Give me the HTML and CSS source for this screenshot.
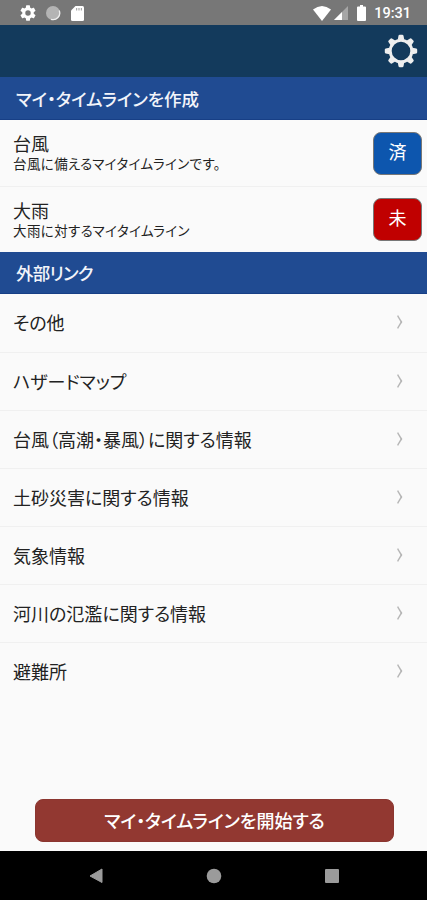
FILE: index.html
```html
<!DOCTYPE html>
<html lang="ja">
  <head>
    <meta charset="UTF-8">
    <meta name="viewport" content="width=device-width">
    <title>マイ・タイムライン</title>
    <link rel="stylesheet" href="styles.css">
  </head>
  <body>
    <div class="status">
      <svg class="status-gear" width="16" height="16" viewBox="2 2 20 20"><path fill="#fff" d="M19.14 12.94c.04-.3.06-.61.06-.94s-.02-.64-.07-.94l2.03-1.58a.49.49 0 0 0 .12-.61l-1.92-3.32a.49.49 0 0 0-.59-.22l-2.39.96a7 7 0 0 0-1.62-.94l-.36-2.54a.48.48 0 0 0-.48-.41h-3.84a.48.48 0 0 0-.47.41l-.36 2.54a7.2 7.2 0 0 0-1.62.94l-2.39-.96a.48.48 0 0 0-.59.22L2.74 8.87a.48.48 0 0 0 .12.61l2.03 1.58a6 6 0 0 0 0 1.88l-2.03 1.58a.49.49 0 0 0-.12.61l1.92 3.32c.12.22.37.29.59.22l2.39-.96c.5.38 1.03.7 1.62.94l.36 2.54c.05.24.24.41.48.41h3.84c.24 0 .44-.17.47-.41l.36-2.54a7 7 0 0 0 1.62-.94l2.39.96c.22.08.47 0 .59-.22l1.92-3.32a.48.48 0 0 0-.12-.61zM12 15.4a3.4 3.4 0 1 1 0-6.8 3.4 3.4 0 0 1 0 6.8z"/></svg>
      <svg class="status-sync" width="16" height="16" viewBox="0 0 16 16"><circle cx="8" cy="8" r="7" fill="#b4b4b4"/><path d="M14.2 5.5A6.6 6.6 0 0 1 6 14.3" fill="none" stroke="#eee" stroke-width="1.3"/></svg>
      <svg class="status-card" width="13" height="15" viewBox="0 0 13 15"><path fill="#fff" d="M4.5 0H11.5Q13 0 13 1.5V13.5Q13 15 11.5 15H1.5Q0 15 0 13.5V4.5z"/><path stroke="#aaa" stroke-width="1.2" d="M5.6 2v2.5M8 2v2.5M10.4 2v2.5"/></svg>
      <svg class="status-wifi" width="18" height="15" viewBox="0 0 18 15"><path fill="#fff" d="M0 3.500Q9-3.500 18 3.500L9 15z"/></svg>
      <svg class="status-signal" width="14" height="14" viewBox="0 0 14 14"><path fill="#a6a6a6" d="M14 0v14H0z"/><path fill="#fff" d="M8 6v8H0z"/></svg>
      <svg class="status-battery" width="9" height="16" viewBox="0 0 9 16"><path fill="#fff" d="M3 0h3v1.5h2q1 0 1 1V15q0 1-1 1H1q-1 0-1-1V2.5q0-1 1-1h2z"/></svg>
      <span class="clock">19:31</span>
    </div>
    <header class="appbar">
      <svg width="34" height="34" viewBox="-17 -17 34 34">
        <circle r="10.8" fill="none" stroke="#eee" stroke-width="3"/>
        <g fill="#eee">
          <path id="tooth" d="M-3.200-11.500L-2.500-15.300Q-2.300-16.200-1.200-16.200H1.200Q2.300-16.200 2.500-15.300L3.200-11.500z"/>
          <use href="#tooth" transform="rotate(45)"/>
          <use href="#tooth" transform="rotate(90)"/>
          <use href="#tooth" transform="rotate(135)"/>
          <use href="#tooth" transform="rotate(180)"/>
          <use href="#tooth" transform="rotate(225)"/>
          <use href="#tooth" transform="rotate(270)"/>
          <use href="#tooth" transform="rotate(315)"/>
        </g>
      </svg>
    </header>
    <main>
      <h2>マイ・タイムラインを作成</h2>
      <ul class="timelines">
        <li>
          <div>
            <h3>台風</h3>
            <p>台風に備えるマイタイムラインです。</p>
          </div>
          <span class="badge done">済</span>
        </li>
        <li>
          <div>
            <h3>大雨</h3>
            <p>大雨に対するマイタイムライン</p>
          </div>
          <span class="badge yet">未</span>
        </li>
      </ul>
      <h2 class="external">外部リンク</h2>
      <ul class="links">
        <li>その他</li>
        <li>ハザードマップ</li>
        <li>台風（高潮・暴風）に関する情報</li>
        <li>土砂災害に関する情報</li>
        <li>気象情報</li>
        <li>河川の氾濫に関する情報</li>
        <li>避難所</li>
      </ul>
      <button type="button" class="start">マイ・タイムラインを開始する</button>
    </main>
    <nav class="navbar">
      <svg width="14" height="16" viewBox="0 0 14 16"><path fill="#9b9b9b" d="M13 1v13.500L1 8z" stroke="#9b9b9b" stroke-linejoin="round"/></svg>
      <svg width="16" height="16" viewBox="0 0 16 16"><circle cx="8" cy="8" r="7.3" fill="#9b9b9b"/></svg>
      <svg width="14" height="14" viewBox="0 0 14 14"><rect width="14" height="14" rx="1" fill="#9b9b9b"/></svg>
    </nav>
  </body>
</html>
```
FILE: styles.css
```css
* {
  box-sizing: border-box;
}
body {
  display: flex;
  flex-direction: column;
  height: 900px;
  margin: 0;
  background: #fafafa;
  color: #222;
  font-family: "Noto Sans CJK JP", sans-serif;
  font-size: 18px;
  font-feature-settings: "palt", "kern";
}
h2, h3, p, ul {
  margin: 0;
  padding: 0;
  font-weight: 400;
  list-style: none;
}
svg {
  display: block;
  flex: none;
}
.status {
  display: flex;
  align-items: center;
  height: 25px;
  padding: 1px 16px 0 20px;
  background: #777;
}
.status-sync {
  margin-left: 9px;
}
.status-card {
  margin-left: 10px;
}
.status-wifi {
  margin-left: auto;
}
.status-signal {
  margin-left: 3px;
}
.status-battery {
  margin: 0 8px 0 9px;
}
.clock {
  padding-top: 2px;
  color: #fff;
  font: 500 14.5px/22px Roboto, sans-serif;
}
.appbar {
  display: flex;
  justify-content: flex-end;
  align-items: center;
  height: 52px;
  padding-right: 9px;
  background: #133a5c;
}
main {
  display: flex;
  flex: 1;
  flex-direction: column;
}
h2 {
  height: 43px;
  padding-left: 16px;
  border-bottom: 1px solid #173f86;
  background: #204b92;
  color: #f2f4fa;
  font-size: 17.5px;
  font-weight: 500;
  line-height: 43px;
}
.external {
  height: 42px;
  letter-spacing: -.8px;
  line-height: 41px;
}
.timelines li {
  display: flex;
  justify-content: space-between;
  align-items: center;
  height: 66px;
  padding: 0 5px 0 13px;
}
.timelines li + li {
  border-top: 1px solid #f0f0f0;
}
.timelines div {
  padding-bottom: 2px;
}
h3 {
  font-size: 18px;
  line-height: 22px;
}
.timelines p {
  font-size: 13.5px;
  letter-spacing: .38px;
  line-height: 18px;
}
.badge {
  width: 49px;
  height: 43px;
  border: 1px solid #777;
  border-radius: 8px;
  color: #fff;
  line-height: 37px;
  text-align: center;
}
.done {
  background: #0d56ae;
}
.yet {
  background: #c00000;
}
.links li {
  display: flex;
  justify-content: space-between;
  align-items: center;
  height: 58px;
  padding: 0 24px 2px 13px;
}
.links li + li {
  border-top: 1px solid #f0f0f0;
}
.links li::after {
  width: 8px;
  height: 8px;
  border: solid #b5b5b5;
  border-width: 2px 2px 0 0;
  content: "";
  transform: scaleX(.6) rotate(45deg);
}
.start {
  width: 359px;
  height: 43px;
  margin: auto auto 9px 35px;
  padding: 0 0 1px;
  border: 1px solid #8b3630;
  border-radius: 8px;
  background: #923831;
  color: #fff;
  font: inherit;
  font-feature-settings: inherit;
  font-weight: 500;
}
.navbar {
  display: flex;
  justify-content: space-between;
  align-items: center;
  height: 49px;
  padding: 0 88px 0 89px;
  background: #000;
}
```
